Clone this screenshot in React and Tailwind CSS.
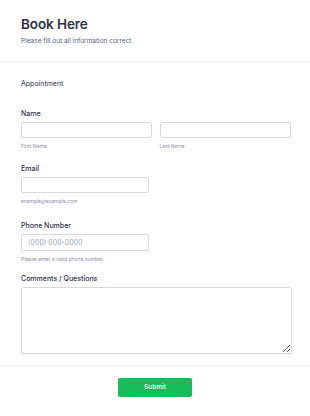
import React from 'react'

const Label = ({ children }) => (
  <p className="text-[7px] font-medium leading-none text-[#2c3345]">{children}</p>
)

const Hint = ({ children }) => (
  <p className="mt-[6px] text-[5px] leading-none text-[#8d8fa8]">{children}</p>
)

const inputCls =
  'block h-[16px] rounded-[2px] border border-[#d6d9e2] bg-white px-[6px] text-[7px] text-[#2c3345] outline-none placeholder:text-[#a0a7b8]'

export default function App() {
  return (
    <div className="min-h-screen w-[310px] bg-white font-['Inter',sans-serif]">
      <header className="border-b border-[#eceef2] px-[21px] pb-[17px] pt-[18px]">
        <h1 className="text-[13.5px] font-semibold leading-none tracking-[-0.1px] text-[#2c3345]">Book Here</h1>
        <p className="mt-[6px] text-[6.5px] leading-none text-[#57647e]">Please fill out all information correct</p>
      </header>

      <main className="px-[21px] pt-[18px]">
        <p className="text-[7px] font-normal leading-none text-[#2c3345]">Appointment</p>

        <section className="mt-[23px]">
          <Label>Name</Label>
          <div className="mt-[5px] grid grid-cols-2 gap-[9px]">
            <div>
              <input className={`${inputCls} w-[131px]`} />
              <Hint>First Name</Hint>
            </div>
            <div>
              <input className={`${inputCls} w-[131px]`} />
              <Hint>Last Name</Hint>
            </div>
          </div>
        </section>

        <section className="mt-[16px]">
          <Label>Email</Label>
          <input className={`${inputCls} mt-[5px] w-[128px]`} />
          <Hint>example@example.com</Hint>
        </section>

        <section className="mt-[18px]">
          <Label>Phone Number</Label>
          <input className={`${inputCls} mt-[5px] h-[17px] w-[128px]`} placeholder="(000) 000-0000" />
          <Hint>Please enter a valid phone number.</Hint>
        </section>

        <section className="mt-[13px]">
          <Label>Comments / Questions</Label>
          <textarea className="mt-[5px] block h-[67px] w-[271px] resize rounded-[2px] border border-[#d6d9e2] shadow-[0_1px_1px_rgba(0,0,0,0.06)] outline-none" />
        </section>
      </main>

      <footer className="mt-[11px] flex justify-center border-t border-[#eceef2] pt-[12px]">
        <button className="h-[19px] w-[74px] rounded-[2px] bg-[#18bd5b] text-[6.5px] font-medium text-white">Submit</button>
      </footer>
    </div>
  )
}
